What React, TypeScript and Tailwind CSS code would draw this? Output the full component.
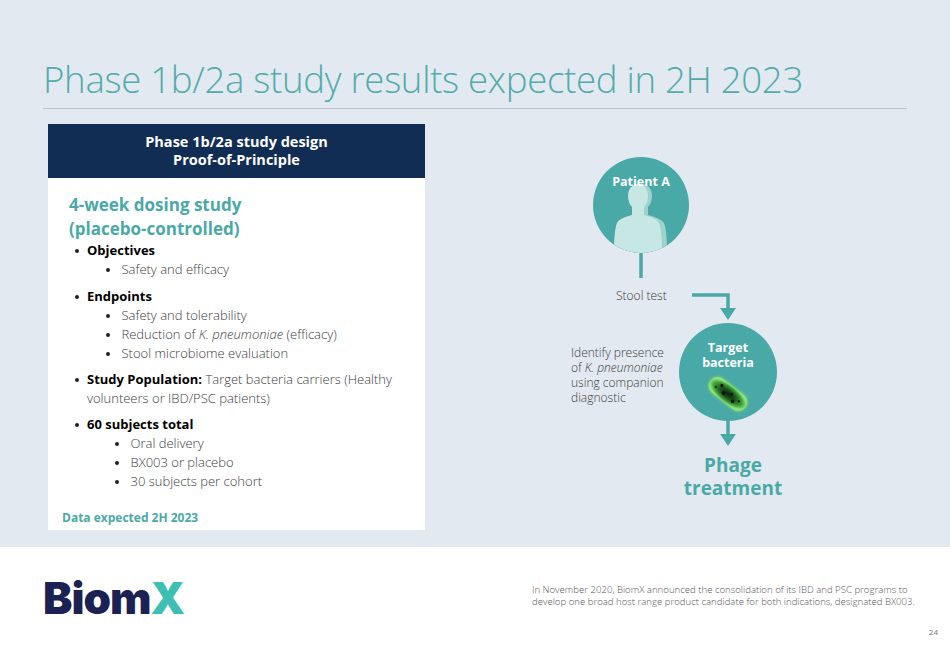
import React from 'react';

const TEAL = '#48a9a6';
const SANS = '"Open Sans", "Liberation Sans", sans-serif';

const Bullet: React.FC<{ children: React.ReactNode; sub?: boolean; deep?: boolean }> = ({ children, sub, deep }) => (
  <li className={`flex ${sub ? (deep ? 'pl-[67px]' : 'pl-[58px]') : 'pl-[27px]'}`}>
    <span className={`${sub ? 'w-[15.5px]' : 'w-[12px]'} h-[19px] shrink-0 flex items-center`}>
      <span className="block w-[3.5px] h-[3.5px] rounded-full bg-[#222] mt-[1px]" />
    </span>
    <span>{children}</span>
  </li>
);

const Person = () => (
  <svg viewBox="0 0 96 96" className="absolute inset-0 w-full h-full">
    <defs>
      <clipPath id="pc">
        <circle cx="48" cy="48" r="48" />
      </clipPath>
    </defs>
    <g clipPath="url(#pc)">
      <path
        d="M47 27c-6 0-10 5-10 12 0 5 2 9 4 11v8c-7 2-13 4-16 8-2 5-3 14-3 30h52c0-16-1-25-3-30-3-4-9-6-16-8v-8c2-2 4-6 4-11 0-7-4-12-10-12z"
        fill="#9fd2cf"
      />
      <path
        d="M45 27c-6 0-10 5-10 12 0 5 2 9 4 11v8c-7 2-13 4-15 8-2 5-3 14-3 30h48c0-16-1-25-3-30-2-4-8-6-15-8v-8c2-2 4-6 4-11 0-7-4-12-10-12z"
        fill="#c6e7e4"
      />
    </g>
  </svg>
);

const Bacterium = () => (
  <svg viewBox="0 0 50 44" className="w-[50px] h-[44px]">
    <defs>
      <radialGradient id="bg" cx="50%" cy="50%" r="50%">
        <stop offset="0%" stopColor="#0d200e" />
        <stop offset="45%" stopColor="#1f5a1f" />
        <stop offset="78%" stopColor="#3fa63a" />
        <stop offset="100%" stopColor="#8ee07e" />
      </radialGradient>
      <filter id="glow" x="-20%" y="-40%" width="140%" height="180%">
        <feGaussianBlur stdDeviation="1.2" />
      </filter>
    </defs>
    <g transform="rotate(38 25 22)">
      <rect x="2" y="12" width="46" height="20" rx="10" fill="#7fd86f" opacity="0.7" filter="url(#glow)" />
      <rect x="3" y="13" width="44" height="18" rx="9" fill="url(#bg)" />
      <circle cx="15" cy="19" r="1.6" fill="#081408" />
      <circle cx="21" cy="24" r="2" fill="#081408" />
      <circle cx="28" cy="20" r="1.4" fill="#081408" />
      <circle cx="33" cy="25" r="1.8" fill="#081408" />
      <circle cx="38" cy="21" r="1.2" fill="#0c1d0c" />
      <circle cx="11" cy="24" r="1.1" fill="#123312" />
    </g>
  </svg>
);

const App: React.FC = () => {
  return (
    <div className="w-[950px] h-[647px] flex flex-col overflow-hidden" style={{ fontFamily: SANS }}>
      <div className="h-[547px] bg-[#e2e9f0] px-[43px] pt-[57px]">
        <h1 className="text-[36.6px] leading-[44px] font-light text-[#52acaa] tracking-[-0.3px]">
          Phase 1b/2a study results expected in 2H 2023
        </h1>
        <div className="mt-[7px] h-px w-[864px] bg-[#b9c3cd]" />

        <div className="flex mt-[15px]">
          <div className="ml-[5px] w-[377px] h-[406px] bg-white flex flex-col">
            <div className="h-[54px] bg-[#112d53] flex flex-col items-center justify-center text-white font-bold text-[14.5px] leading-[18px]">
              <span>Phase 1b/2a study design</span>
              <span>Proof-of-Principle</span>
            </div>
            <div className="pt-[15px] pl-[21px] text-[#3c3c3c]">
              <div className="text-[#4aa9a7] font-bold text-[17px] leading-[24px]">
                <div>4-week dosing study</div>
                <div>(placebo-controlled)</div>
              </div>
              <ul className="text-[13px] leading-[19px] font-light -ml-[21px]">
                <Bullet><b className="font-bold text-black">Objectives</b></Bullet>
                <Bullet sub>Safety and efficacy</Bullet>
                <div className="h-[8px]" />
                <Bullet><b className="font-bold text-black">Endpoints</b></Bullet>
                <Bullet sub>Safety and tolerability</Bullet>
                <Bullet sub>Reduction of <i>K. pneumoniae</i> (efficacy)</Bullet>
                <Bullet sub>Stool microbiome evaluation</Bullet>
                <div className="h-[7px]" />
                <Bullet>
                  <b className="font-bold text-black">Study Population:</b> Target bacteria carriers (Healthy
                  <br />
                  volunteers or IBD/PSC patients)
                </Bullet>
                <div className="h-[7px]" />
                <Bullet><b className="font-bold text-black">60 subjects total</b></Bullet>
                <Bullet sub deep>Oral delivery</Bullet>
                <Bullet sub deep>BX003 or placebo</Bullet>
                <Bullet sub deep>30 subjects per cohort</Bullet>
              </ul>
              <div className="mt-[18px] -ml-[7px] text-[12px] font-bold text-[#4aa9a7]">Data expected 2H 2023</div>
            </div>
          </div>

          <div className="relative ml-[15px] w-[467px] h-[423px]">
            <svg className="absolute inset-0 w-full h-full" viewBox="0 0 467 423">
              <line x1="201" y1="128" x2="201" y2="154" stroke={TEAL} strokeWidth="3.5" />
              <polyline points="252,171 288,171 288,186" fill="none" stroke={TEAL} strokeWidth="3.5" />
              <polygon points="280,184 296,184 288,196" fill={TEAL} />
              <line x1="288" y1="294" x2="288" y2="312" stroke={TEAL} strokeWidth="3.5" />
              <polygon points="280,310 296,310 288,322" fill={TEAL} />
            </svg>

            <div className="absolute left-[153px] top-[33px] w-[96px] h-[96px] rounded-full bg-[#48a9a6] overflow-hidden">
              <Person />
              <div className="relative pt-[16px] text-center text-white font-bold text-[12.5px]">Patient A</div>
            </div>

            <div className="absolute left-[176px] top-[163px] text-[12px] font-light text-[#3c3c3c]">Stool test</div>

            <div className="absolute left-[131px] top-[221px] text-[12px] leading-[15px] font-light text-[#3c3c3c]">
              <div>Identify presence</div>
              <div>of <i>K. pneumoniae</i></div>
              <div>using companion</div>
              <div>diagnostic</div>
            </div>

            <div className="absolute left-[239px] top-[199px] w-[98px] h-[98px] rounded-full bg-[#48a9a6] flex flex-col items-center pt-[17px]">
              <div className="text-center text-white font-bold text-[12.5px] leading-[15px]">
                <div>Target</div>
                <div>bacteria</div>
              </div>
              <div className="mt-[2px]">
                <Bacterium />
              </div>
            </div>

            <div className="absolute left-[233px] top-[330px] w-[120px] text-center text-[19px] leading-[23px] font-bold text-[#4aa9a7]">
              <div>Phage</div>
              <div>treatment</div>
            </div>
          </div>
        </div>
      </div>

      <div className="h-[100px] bg-white flex relative">
        <div className="pl-[43px] pt-[25px]">
          <span className="text-[44px] font-black leading-[52px] tracking-[-1px]" style={{ fontFamily: 'Inter, "Liberation Sans", sans-serif' }}>
            <span className="text-[#1b2152]">Biom</span>
            <span className="text-[#3dbfb3]">X</span>
          </span>
        </div>
        <div className="ml-auto mr-[28px] pt-[37px] text-[9.6px] leading-[12px] font-light text-[#555] w-[390px] whitespace-nowrap">
          <div>In November 2020, BiomX announced the consolidation of its IBD and PSC programs to</div>
          <div>develop one broad host range product candidate for both indications, designated BX003.</div>
        </div>
        <div className="absolute right-[12px] bottom-[9px] text-[8px] text-[#777]">24</div>
      </div>
    </div>
  );
};

export default App;
